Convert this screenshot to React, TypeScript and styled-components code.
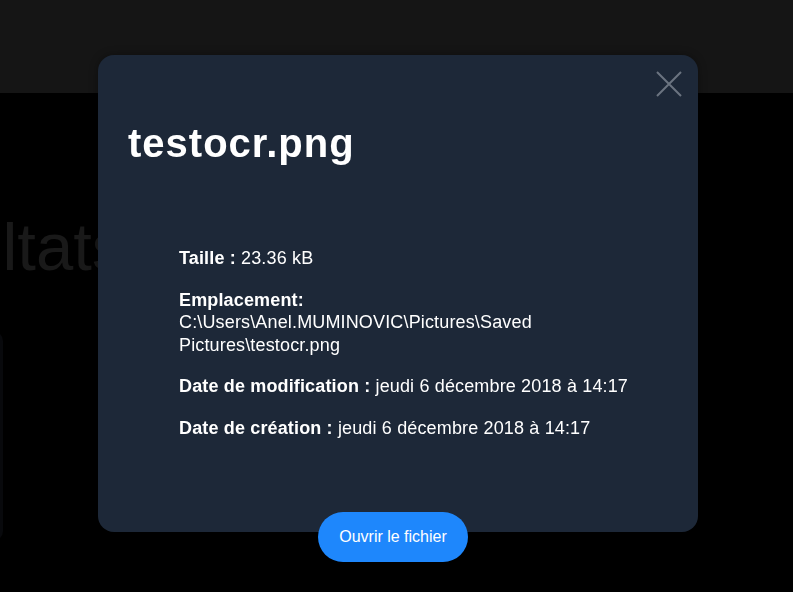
import React from "react";
import styled, { createGlobalStyle } from "styled-components";

const Global = createGlobalStyle`
  html, body { margin: 0; padding: 0; background: #000; overflow: hidden; }
  body { font-family: "Liberation Sans", Arial, sans-serif; }
  * { box-sizing: border-box; }
`;

const Page = styled.div`
  width: 793px;
  height: 592px;
  background: #000;
  overflow: hidden;
`;

const NavBar = styled.header`
  height: 93px;
  background: #151515;
`;

const Main = styled.main`
  display: flex;
  flex-direction: column;
`;

const PageTitle = styled.h2`
  margin: 120px 0 0 -154px;
  font-size: 67px;
  line-height: 68px;
  font-weight: 400;
  color: #191919;
  white-space: nowrap;
`;

const GhostCard = styled.div`
  margin: 50px 0 0 -297px;
  width: 300px;
  height: 210px;
  border-radius: 10px;
  background: #08090c;
`;

const Overlay = styled.div`
  position: fixed;
  inset: 0;
  display: flex;
  align-items: flex-start;
  padding: 55px 0 0 98px;
`;

const Modal = styled.section`
  position: relative;
  width: 600px;
  height: 477px;
  padding: 30px;
  border-radius: 16px;
  background: #1d2838;
  color: #fff;
  box-shadow: 0 0 8px rgba(0, 0, 0, 0.35);
`;

const CloseButton = styled.button`
  position: absolute;
  top: 16px;
  left: 558px;
  width: 26px;
  height: 26px;
  padding: 0;
  border: none;
  background: transparent;
  display: flex;
  align-items: center;
  justify-content: center;
  cursor: pointer;
`;

const Title = styled.h1`
  margin: 35px 0 0 0;
  font-size: 40px;
  line-height: 46px;
  font-weight: 700;
  letter-spacing: 1px;
`;

const Info = styled.div`
  margin: 81px 0 0 51px;
  display: flex;
  flex-direction: column;
  gap: 19px;
`;

const Field = styled.p`
  margin: 0;
  font-size: 18px;
  line-height: 22.5px;
  letter-spacing: 0.15px;
  max-width: 480px;
`;

const Label = styled.strong`
  font-weight: 700;
`;

const OpenButton = styled.button`
  position: absolute;
  left: 220px;
  top: 457px;
  width: 150px;
  height: 50px;
  border: none;
  border-radius: 25px;
  background: #1e87fc;
  color: #fff;
  font-family: "Liberation Sans", Arial, sans-serif;
  font-size: 16px;
  cursor: pointer;
`;

export default function App() {
  return (
    <>
      <Global />
      <Page>
        <NavBar />
        <Main>
          <PageTitle>Résultats</PageTitle>
          <GhostCard />
        </Main>
      </Page>
      <Overlay>
        <Modal>
          <CloseButton aria-label="Fermer">
            <svg width="26" height="26" viewBox="0 0 26 26">
              <path d="M1 1 L25 25 M25 1 L1 25" stroke="#6b7480" strokeWidth="2" fill="none" />
            </svg>
          </CloseButton>
          <Title>testocr.png</Title>
          <Info>
            <Field>
              <Label>Taille :</Label> 23.36 kB
            </Field>
            <Field>
              <Label>Emplacement:</Label>
              <br />
              C:\Users\Anel.MUMINOVIC\Pictures\Saved Pictures\testocr.png
            </Field>
            <Field>
              <Label>Date de modification :</Label> jeudi 6 décembre 2018 à 14:17
            </Field>
            <Field>
              <Label>Date de création :</Label> jeudi 6 décembre 2018 à 14:17
            </Field>
          </Info>
          <OpenButton>Ouvrir le fichier</OpenButton>
        </Modal>
      </Overlay>
    </>
  );
}
